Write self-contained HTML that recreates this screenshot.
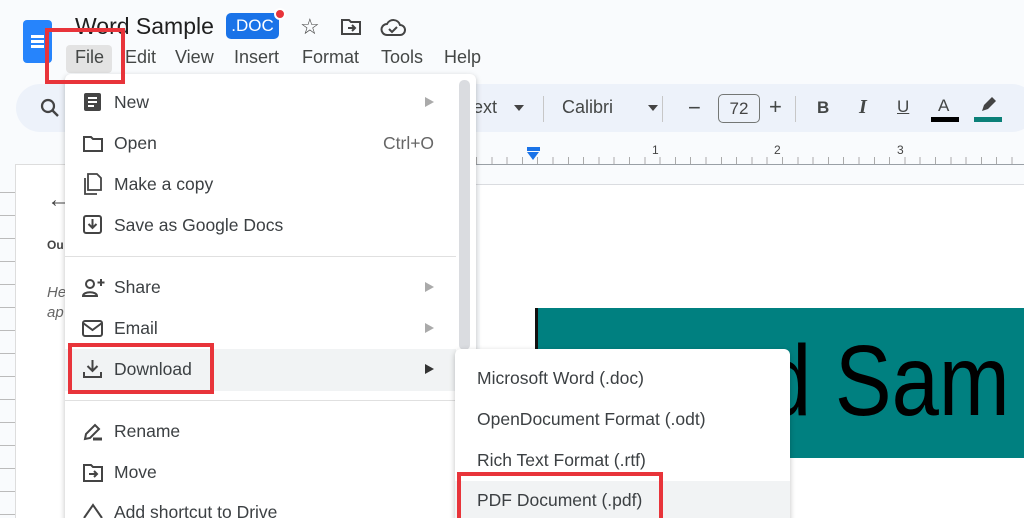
<!DOCTYPE html>
<html><head><meta charset="utf-8"><style>
*{margin:0;padding:0;box-sizing:border-box}
html,body{width:1024px;height:518px;overflow:hidden}
body{position:relative;background:#f9fbfd;font-family:"Liberation Sans",sans-serif;color:#202124}
.a{position:absolute}
.mi{position:absolute;left:114px;font-size:17.5px;color:#3c4043;white-space:nowrap}
.tb{position:absolute;font-size:18px;color:#444746;white-space:nowrap}
.arr{position:absolute;left:425px;width:0;height:0;border-left:9px solid #999;border-top:5px solid transparent;border-bottom:5px solid transparent}
.ic{position:absolute;left:82px}
.sm{position:absolute;left:477px;font-size:17.5px;color:#3c4043;white-space:nowrap}
.red{position:absolute;border:4px solid #e8343a}
</style></head><body>
<div class="a" style="left:23px;top:20px;width:29px;height:43px;background:#2684fc;border-radius:4px"></div>
<div class="a" style="left:31px;top:35px;width:13px;height:3px;background:#fff;box-shadow:0 5px 0 #fff,0 10px 0 #fff"></div>
<div class="a" style="left:75px;top:13px;font-size:23px;color:#1f1f1f">Word Sample</div>
<div class="a" style="left:226px;top:13px;width:53px;height:26px;background:#1a73e8;border-radius:5px;color:#fff;font-size:17px;text-align:center;line-height:26px">.DOC</div>
<div class="a" style="left:274px;top:8px;width:12px;height:12px;background:#e8343a;border-radius:50%;border:2px solid #fff"></div>
<div class="a" style="left:300px;top:14px;font-size:22px;color:#444">☆</div>
<svg class="a" style="left:340px;top:18px" width="22" height="18" viewBox="0 0 22 18"><path d="M2 2h7l2 2h9v12H2z" fill="none" stroke="#444" stroke-width="2"/><path d="M8 10h7M12 7l3 3-3 3" fill="none" stroke="#444" stroke-width="2"/></svg>
<svg class="a" style="left:380px;top:17px" width="26" height="20" viewBox="0 0 26 20"><path d="M7 18h13a5 5 0 000-10 7 7 0 00-13-1 5.5 5.5 0 000 11z" fill="none" stroke="#444" stroke-width="2"/><path d="M9 12l3 3 5-5" fill="none" stroke="#444" stroke-width="2"/></svg>
<div class="a" style="left:66px;top:45px;width:46px;height:28px;background:#e3e3e3;border-radius:4px"></div>
<div class="tb" style="left:75px;top:47px">File</div>
<div class="tb" style="left:125px;top:47px">Edit</div>
<div class="tb" style="left:175px;top:47px">View</div>
<div class="tb" style="left:234px;top:47px">Insert</div>
<div class="tb" style="left:302px;top:47px">Format</div>
<div class="tb" style="left:381px;top:47px">Tools</div>
<div class="tb" style="left:444px;top:47px">Help</div>
<div class="a" style="left:16px;top:84px;width:1020px;height:48px;background:#edf2fa;border-radius:24px"></div>
<svg class="a" style="left:40px;top:98px" width="20" height="20"><circle cx="8" cy="8" r="6" fill="none" stroke="#444" stroke-width="2.2"/><path d="M12 12l6 6" stroke="#444" stroke-width="2.4"/></svg>
<div class="tb" style="left:473px;top:97px">ext</div>
<div class="a" style="left:514px;top:105px;border-top:6px solid #444;border-left:5px solid transparent;border-right:5px solid transparent"></div>
<div class="a" style="left:543px;top:96px;width:1px;height:26px;background:#c7c7c7"></div>
<div class="tb" style="left:562px;top:97px">Calibri</div>
<div class="a" style="left:648px;top:105px;border-top:6px solid #444;border-left:5px solid transparent;border-right:5px solid transparent"></div>
<div class="a" style="left:662px;top:96px;width:1px;height:26px;background:#c7c7c7"></div>
<div class="tb" style="left:688px;top:95px;font-size:22px">−</div>
<div class="a" style="left:718px;top:94px;width:42px;height:29px;border:1px solid #747775;border-radius:5px;font-size:17px;text-align:center;line-height:27px;color:#444">72</div>
<div class="tb" style="left:769px;top:94px;font-size:22px">+</div>
<div class="a" style="left:795px;top:96px;width:1px;height:26px;background:#c7c7c7"></div>
<div class="tb" style="left:817px;top:98px;font-weight:bold;font-size:17px">B</div>
<div class="tb" style="left:859px;top:96px;font-style:italic;font-family:'Liberation Serif',serif;font-size:20px;font-weight:bold">I</div>
<div class="tb" style="left:897px;top:97px;text-decoration:underline;font-size:17px">U</div>
<div class="tb" style="left:938px;top:96px;font-size:17px">A</div>
<div class="a" style="left:931px;top:117px;width:28px;height:5px;background:#000"></div>
<svg class="a" style="left:978px;top:95px" width="22" height="20"><path d="M4 16l2-6 8-8 4 4-8 8z" fill="#444"/></svg>
<div class="a" style="left:974px;top:117px;width:28px;height:5px;background:#0b8078"></div>
<div class="a" style="left:476px;top:164px;width:548px;height:1px;background:#9aa0a6"></div>
<div class="a" style="left:476px;top:157px;width:548px;height:7px;background:repeating-linear-gradient(90deg,#aaa 0 1px,transparent 1px 15.3px)"></div>
<div class="a" style="left:652px;top:143px;font-size:12px;color:#444">1</div>
<div class="a" style="left:774px;top:143px;font-size:12px;color:#444">2</div>
<div class="a" style="left:897px;top:143px;font-size:12px;color:#444">3</div>
<div class="a" style="left:527px;top:147px;width:13px;height:4px;background:#1a73e8"></div>
<div class="a" style="left:527px;top:152px;border-top:8px solid #1a73e8;border-left:6.5px solid transparent;border-right:6.5px solid transparent"></div>
<div class="a" style="left:476px;top:184px;width:548px;height:1px;background:#dadce0"></div>
<div class="a" style="left:480px;top:185px;width:544px;height:333px;background:#fff"></div>
<div class="a" style="left:535px;top:308px;width:489px;height:150px;background:#008080;border-left:3px solid #111;overflow:hidden"><div style="position:absolute;left:226px;top:8px;font-size:100px;color:#000;white-space:nowrap;line-height:130px;transform:scaleX(.85);transform-origin:0 0">d Sam</div></div>
<div class="a" style="left:0;top:170px;width:15px;height:348px;background:repeating-linear-gradient(180deg,transparent 0 22px,#bbb 22px 23px)"></div>
<div class="a" style="left:15px;top:164px;width:60px;height:354px;background:#fff;border-left:1px solid #ddd;border-top:1px solid #ddd"></div>
<div class="a" style="left:47px;top:186px;font-size:24px;color:#444">←</div>
<div class="a" style="left:47px;top:238px;font-size:12px;font-weight:bold;color:#444">Ou</div>
<div class="a" style="left:47px;top:284px;font-size:15px;font-style:italic;color:#666">He</div>
<div class="a" style="left:47px;top:304px;font-size:15px;font-style:italic;color:#666">ap</div>
<div class="a" style="left:65px;top:74px;width:411px;height:460px;background:#fff;border-radius:6px;box-shadow:0 2px 6px rgba(0,0,0,.25)"></div>
<div class="a" style="left:459px;top:80px;width:11px;height:270px;background:#dadce0;border-radius:5px"></div>
<div class="a" style="left:65px;top:349px;width:391px;height:42px;background:#f1f3f4"></div>
<div class="a" style="left:65px;top:256px;width:391px;height:1px;background:#e0e0e0"></div>
<div class="a" style="left:65px;top:400px;width:391px;height:1px;background:#e0e0e0"></div>
<svg class="ic" style="top:92px" width="22" height="20"><rect x="2" y="1" width="17" height="18" rx="2" fill="#444"/><path d="M6 6h9M6 10h9M6 14h6" stroke="#fff" stroke-width="2"/></svg>
<div class="mi" style="top:92px">New</div><div class="arr" style="top:97px;border-left-color:#aaa"></div>
<svg class="ic" style="top:134px" width="22" height="20"><path d="M2 3h7l2 2h9v12H2z" fill="none" stroke="#444" stroke-width="2"/></svg>
<div class="mi" style="top:133px">Open</div><div class="a" style="left:383px;top:133px;font-size:17.5px;color:#666">Ctrl+O</div>
<svg class="ic" style="top:172px" width="22" height="24"><path d="M6 2h9l4 4v12H6z M3 6v16h12" fill="none" stroke="#444" stroke-width="1.8"/></svg>
<div class="mi" style="top:174px">Make a copy</div>
<svg class="ic" style="top:214px" width="22" height="22"><rect x="2" y="2" width="17" height="17" rx="2" fill="none" stroke="#444" stroke-width="2"/><path d="M10.5 5v9M6.5 10l4 4 4-4" fill="none" stroke="#444" stroke-width="2"/></svg>
<div class="mi" style="top:215px">Save as Google Docs</div>
<svg class="ic" style="top:277px" width="24" height="22"><circle cx="8" cy="7" r="4" fill="none" stroke="#444" stroke-width="2"/><path d="M1 19c0-5 14-5 14 0z" fill="none" stroke="#444" stroke-width="2"/><path d="M19 2v7M15.5 5.5h7" stroke="#444" stroke-width="2"/></svg>
<div class="mi" style="top:277px">Share</div><div class="arr" style="top:282px;border-left-color:#aaa"></div>
<svg class="ic" style="top:319px" width="22" height="20"><rect x="1" y="2" width="19" height="15" rx="2" fill="none" stroke="#444" stroke-width="2"/><path d="M1 4l9.5 7 9.5-7" fill="none" stroke="#444" stroke-width="2"/></svg>
<div class="mi" style="top:318px">Email</div><div class="arr" style="top:323px;border-left-color:#aaa"></div>
<svg class="ic" style="top:358px" width="22" height="22"><path d="M10.5 2v11M5.5 8l5 5 5-5M2 14v5h17v-5" fill="none" stroke="#444" stroke-width="2"/></svg>
<div class="mi" style="top:359px">Download</div><div class="arr" style="top:364px;border-left-color:#333"></div>
<svg class="ic" style="top:421px" width="22" height="22"><path d="M3 18l1-5 9-9 4 4-9 9z" fill="none" stroke="#444" stroke-width="2"/><path d="M11 18h9" stroke="#444" stroke-width="3"/></svg>
<div class="mi" style="top:421px">Rename</div>
<svg class="ic" style="top:463px" width="22" height="20"><path d="M2 2h7l2 2h9v14H2z" fill="none" stroke="#444" stroke-width="2"/><path d="M7 11h8M12 8l3 3-3 3" fill="none" stroke="#444" stroke-width="2"/></svg>
<div class="mi" style="top:462px">Move</div>
<svg class="ic" style="top:502px" width="22" height="20"><path d="M2 16l9-13 9 13" fill="none" stroke="#444" stroke-width="2"/></svg>
<div class="mi" style="top:502px">Add shortcut to Drive</div>
<div class="a" style="left:455px;top:349px;width:335px;height:190px;background:#fff;border-radius:6px;box-shadow:0 2px 6px rgba(0,0,0,.25)"></div>
<div class="a" style="left:455px;top:481px;width:335px;height:37px;background:#f1f3f4"></div>
<div class="sm" style="top:368px">Microsoft Word (.doc)</div>
<div class="sm" style="top:409px">OpenDocument Format (.odt)</div>
<div class="sm" style="top:450px">Rich Text Format (.rtf)</div>
<div class="sm" style="top:490px">PDF Document (.pdf)</div>
<div class="red" style="left:45px;top:28px;width:80px;height:56px"></div>
<div class="red" style="left:68px;top:343px;width:146px;height:51px"></div>
<div class="red" style="left:457px;top:472px;width:206px;height:50px"></div>
</body></html>
